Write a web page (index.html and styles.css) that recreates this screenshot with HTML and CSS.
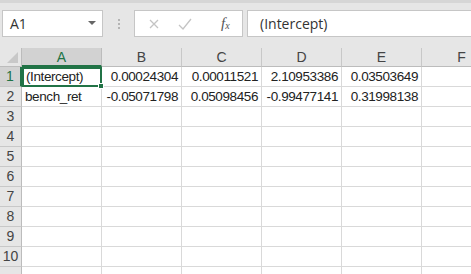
FILE: index.html
```html
<!DOCTYPE html>
<html lang="en">
<head>
    <meta charset="UTF-8">
    <title>Sheet1</title>
    <link rel="stylesheet" href="styles.css">
</head>
<body>
    <div id="formula-bar">
        <div class="name-box">
            <span>A1</span>
            <span class="drop-arrow"></span>
        </div>
        <div class="grip">
            <span></span><span></span><span></span>
        </div>
        <div class="fx-box">
            <svg class="fx-icon" width="14" height="14" viewBox="0 0 14 14">
                <path d="M3 3 L11 11 M11 3 L3 11" stroke="#c4c4c4" stroke-width="1.3" fill="none"/>
            </svg>
            <svg class="fx-icon" width="16" height="14" viewBox="0 0 16 14">
                <path d="M2 8 L6 12 L14 2" stroke="#c4c4c4" stroke-width="1.3" fill="none"/>
            </svg>
            <span class="fx">f<sub>x</sub></span>
        </div>
        <div class="formula-input">(Intercept)</div>
    </div>

    <div id="sheet">
        <div class="corner"><span class="corner-tri"></span></div>
        <div class="col-head selected">A</div>
        <div class="col-head">B</div>
        <div class="col-head">C</div>
        <div class="col-head">D</div>
        <div class="col-head">E</div>
        <div class="col-head">F</div>

        <div class="row-head selected">1</div>
        <div class="cell text active">(Intercept)<span class="fill-handle"></span></div>
        <div class="cell">0.00024304</div>
        <div class="cell">0.00011521</div>
        <div class="cell">2.10953386</div>
        <div class="cell">0.03503649</div>
        <div class="cell"></div>

        <div class="row-head">2</div>
        <div class="cell text">bench_ret</div>
        <div class="cell">-0.05071798</div>
        <div class="cell">0.05098456</div>
        <div class="cell">-0.99477141</div>
        <div class="cell">0.31998138</div>
        <div class="cell"></div>

        <div class="row-head">3</div><div class="cell"></div><div class="cell"></div><div class="cell"></div><div class="cell"></div><div class="cell"></div><div class="cell"></div>
        <div class="row-head">4</div><div class="cell"></div><div class="cell"></div><div class="cell"></div><div class="cell"></div><div class="cell"></div><div class="cell"></div>
        <div class="row-head">5</div><div class="cell"></div><div class="cell"></div><div class="cell"></div><div class="cell"></div><div class="cell"></div><div class="cell"></div>
        <div class="row-head">6</div><div class="cell"></div><div class="cell"></div><div class="cell"></div><div class="cell"></div><div class="cell"></div><div class="cell"></div>
        <div class="row-head">7</div><div class="cell"></div><div class="cell"></div><div class="cell"></div><div class="cell"></div><div class="cell"></div><div class="cell"></div>
        <div class="row-head">8</div><div class="cell"></div><div class="cell"></div><div class="cell"></div><div class="cell"></div><div class="cell"></div><div class="cell"></div>
        <div class="row-head">9</div><div class="cell"></div><div class="cell"></div><div class="cell"></div><div class="cell"></div><div class="cell"></div><div class="cell"></div>
        <div class="row-head">10</div><div class="cell"></div><div class="cell"></div><div class="cell"></div><div class="cell"></div><div class="cell"></div><div class="cell"></div>
        <div class="row-head"></div><div class="cell"></div><div class="cell"></div><div class="cell"></div><div class="cell"></div><div class="cell"></div><div class="cell"></div>
    </div>
</body>
</html>
```

FILE: styles.css
```css
* {
    margin: 0;
    padding: 0;
    box-sizing: border-box;
}

html, body {
    width: 471px;
    height: 274px;
    overflow: hidden;
    background-color: #e6e6e6;
    font-family: 'Liberation Sans', Arial, sans-serif;
}

/* Formula bar */
#formula-bar {
    height: 48px;
    display: flex;
    align-items: flex-start;
    padding-left: 2px;
    border-top: 3px solid #d6d6d6;
    padding-top: 7px;
}

.name-box {
    width: 101px;
    height: 27px;
    background-color: #fff;
    border: 1px solid #c6c6c6;
    display: flex;
    align-items: center;
    justify-content: space-between;
    padding: 0 6px 0 7px;
    font-family: 'Open Sans', sans-serif;
    font-size: 14px;
    color: #333;
}

.drop-arrow {
    width: 0;
    height: 0;
    border-left: 4px solid transparent;
    border-right: 4px solid transparent;
    border-top: 4px solid #666;
    margin-top: -2px;
}

.grip {
    width: 31px;
    height: 27px;
    display: flex;
    flex-direction: column;
    align-items: center;
    justify-content: center;
    gap: 2px;
}

.grip span {
    width: 2px;
    height: 2px;
    background-color: #b4b4b4;
}

.fx-box {
    width: 109px;
    height: 27px;
    background-color: #fff;
    border: 1px solid #c6c6c6;
    display: flex;
    align-items: center;
    padding-left: 12px;
    gap: 16px;
}

.fx {
    font-family: 'Liberation Serif', serif;
    font-style: italic;
    font-size: 15px;
    color: #555;
    margin-left: 12px;
}

.fx sub {
    font-size: 10px;
    vertical-align: -1px;
}

.formula-input {
    flex: 1;
    height: 27px;
    margin-left: 4px;
    background-color: #fff;
    border: 1px solid #c6c6c6;
    border-right: none;
    padding-left: 12px;
    line-height: 25px;
    font-family: 'Open Sans', sans-serif;
    font-size: 14px;
    color: #333;
}

/* Sheet grid */
#sheet {
    display: grid;
    grid-template-columns: 22px repeat(6, 80px);
    grid-template-rows: 19px repeat(11, 20px);
    background-color: #fff;
}

.corner {
    background-color: #e6e6e6;
    border-right: 1px solid #bcbcbc;
    border-bottom: 1px solid #bcbcbc;
    position: relative;
}

.corner-tri {
    position: absolute;
    right: 3px;
    bottom: 3px;
    width: 0;
    height: 0;
    border-left: 11px solid transparent;
    border-bottom: 11px solid #c8c8c8;
}

.col-head {
    background-color: #e6e6e6;
    border-right: 1px solid #c8c8c8;
    border-bottom: 1px solid #bcbcbc;
    text-align: center;
    font-size: 14px;
    line-height: 18px;
    color: #444;
}

.col-head.selected {
    background-color: #d2d2d2;
    color: #217346;
    border-bottom: 2px solid #217346;
    border-right-color: #bcbcbc;
}

.row-head {
    background-color: #e6e6e6;
    border-right: 1px solid #bcbcbc;
    border-bottom: 1px solid #c8c8c8;
    text-align: center;
    font-size: 14px;
    line-height: 19px;
    color: #444;
}

.row-head.selected {
    background-color: #d2d2d2;
    color: #217346;
    border-right: 2px solid #217346;
}

.cell {
    border-right: 1px solid #d9d9d9;
    border-bottom: 1px solid #d9d9d9;
    font-size: 13.5px;
    letter-spacing: -0.4px;
    line-height: 19px;
    color: #222;
    text-align: right;
    padding-right: 3px;
    white-space: nowrap;
}

.cell.text {
    text-align: left;
    padding-left: 3px;
}

.cell.active {
    position: relative;
    border: 2px solid #217346;
    line-height: 16px;
    padding-left: 2px;
}

.fill-handle {
    position: absolute;
    right: -4px;
    bottom: -4px;
    width: 6px;
    height: 6px;
    background-color: #217346;
    border: 1px solid #fff;
}
```
